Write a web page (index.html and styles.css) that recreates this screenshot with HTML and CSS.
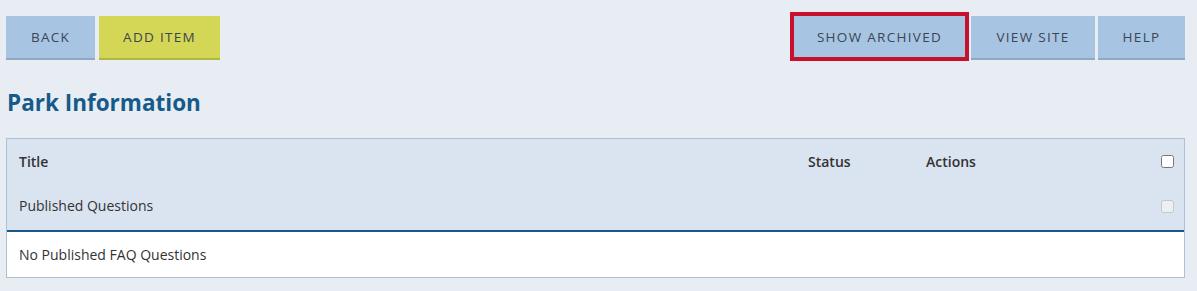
FILE: index.html
```html
<!DOCTYPE html>
<html>
<head>
<meta charset="utf-8">
<link rel="stylesheet" href="styles.css">
</head>
<body>
<div class="page">
  <div class="toolbar">
    <div class="group">
      <button class="btn btn-blue btn-back">Back</button>
      <button class="btn btn-yellow btn-add">Add Item</button>
    </div>
    <div class="group">
      <button class="btn btn-blue btn-focus btn-archived">Show Archived</button>
      <button class="btn btn-blue btn-view">View Site</button>
      <button class="btn btn-blue btn-help">Help</button>
    </div>
  </div>
  <h1 class="title">Park Information</h1>
  <div class="table">
    <div class="row head">
      <div class="c-title th">Title</div>
      <div class="c-status th">Status</div>
      <div class="c-actions th">Actions</div>
      <div class="c-check"><input type="checkbox" class="cb"></div>
    </div>
    <div class="row head sub">
      <div class="c-title">Published Questions</div>
      <div class="c-status"></div>
      <div class="c-actions"></div>
      <div class="c-check"><input type="checkbox" class="cb" disabled></div>
    </div>
    <div class="row body">
      <div class="c-title">No Published FAQ Questions</div>
    </div>
  </div>
</div>
</body>
</html>
```
FILE: styles.css
```css
* { box-sizing: border-box; }
html, body { margin: 0; padding: 0; }
body {
  background: #e8edf3;
  font-family: "Open Sans", Lato, sans-serif;
  color: #333;
}
.page { padding: 16px 12px 0 6px; }
.toolbar {
  display: flex;
  justify-content: space-between;
  align-items: flex-start;
}
.group { display: flex; gap: 4px; align-items: flex-start; }
.group + .group { gap: 3px; }
.btn {
  height: 44px;
  border: 0;
  border-bottom: 2px solid #8ea8c6;
  background: #a7c4e3;
  color: #3c4553;
  font-family: "Open Sans", Lato, sans-serif;
  font-size: 13.5px;
  letter-spacing: 1.3px;
  text-transform: uppercase;
  padding: 0;
  margin: 0;
}
.btn-yellow { background: #d4d655; border-bottom-color: #b2b446; }
.btn-back { width: 89px; }
.btn-add { width: 121px; }
.btn-archived { width: 171px; margin-right: 3px; }
.btn-view { width: 124px; }
.btn-help { width: 87px; }
.btn-focus {
  height: 41px;
  border-bottom: 0;
  outline: 4px solid #c8102e;
}
.title {
  margin: 28px 0 0 1px;
  font-size: 22.5px;
  font-weight: 700;
  color: #155a8a;
  line-height: 30px;
  height: 50px;
}
.table {
  border: 1px solid #aec0d5;
  background: #fff;
}
.row {
  display: flex;
  align-items: center;
  font-size: 14px;
  line-height: 18px;
}
.head { background: #dae4f0; height: 45px; }
.head.sub { height: 48px; border-bottom: 2px solid #155a8a; padding-bottom: 2px; }
.body { height: 45px; }
.c-title { padding-left: 12px; width: 801px; }
.c-status { width: 118px; }
.c-actions { flex: 1; }
.c-check { width: 35px; display: flex; align-items: center; justify-content: flex-end; padding-right: 10px; }
.th { font-weight: 600; }
.cb {
  margin: 0;
  width: 13px;
  height: 13px;
}
```
